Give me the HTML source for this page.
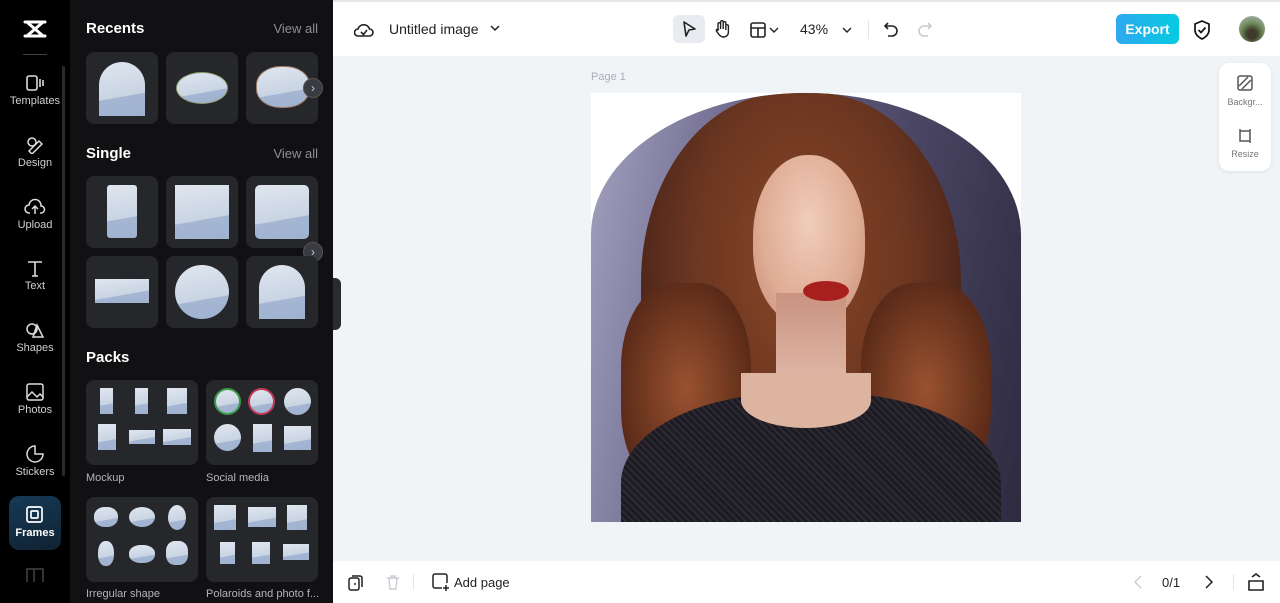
<!DOCTYPE html>
<html><head><meta charset="utf-8"><style>
*{box-sizing:border-box;margin:0;padding:0}
body{width:1280px;height:603px;overflow:hidden;font-family:"Liberation Sans",sans-serif;background:#f1f4f7;position:relative}
.abs{position:absolute}
#rail{left:0;top:0;width:70px;height:603px;background:#000}
#panel{left:70px;top:0;width:263px;height:603px;background:#111113}
.nav{position:absolute;left:0;width:70px;text-align:center;color:#cfcfd2;font-size:11px}
.nav svg{display:block;margin:0 auto 3px}
.h{position:absolute;left:16px;color:#fff;font-weight:bold;font-size:15px}
.va{position:absolute;right:15px;color:#8e8e93;font-size:13px}
.card{position:absolute;width:72px;height:72px;background:#26272b;border-radius:8px;overflow:hidden}
.sky{position:absolute;background:linear-gradient(170deg,#dfe6ef 0%,#c9d4e3 62%,#a4b6d3 63%,#9fb2d0 100%)}
.pk{position:absolute;width:112px;height:85px;background:#26272b;border-radius:8px}
.pl{position:absolute;color:#b5b5b9;font-size:11px}
.arr{position:absolute;width:20px;height:20px;border-radius:50%;background:#3a3b40;border:1px solid #555;color:#ccc;font-size:12px;text-align:center;line-height:18px}
#top{left:333px;top:0;width:947px;height:56px;background:#fff;border-top:2px solid #e4e6ea}
#bot{left:333px;top:561px;width:947px;height:42px;background:#fff}
</style></head><body>
<div id="rail" class="abs">
 <svg class="abs" style="left:23px;top:19px" width="24" height="20" viewBox="0 0 24 20"><path d="M2 3h20M2 17h20M5 4l14 12M19 4L5 16" stroke="#fff" stroke-width="3" fill="none" stroke-linecap="round"/></svg>
 <div class="abs" style="left:23px;top:54px;width:24px;height:1px;background:#444"></div>
 <div class="abs" style="left:62px;top:66px;width:3px;height:410px;background:#2a2a2d;border-radius:2px"></div>
 <div class="nav" style="top:74px"><svg width="20" height="18"><rect x="2" y="2" width="10" height="14" rx="2" fill="none" stroke="#ddd" stroke-width="1.6"/><path d="M15 5v8M18 6v6" stroke="#ddd" stroke-width="1.6"/></svg>Templates</div>
 <div class="nav" style="top:136px"><svg width="20" height="18"><circle cx="7" cy="6" r="4" fill="none" stroke="#ddd" stroke-width="1.5"/><path d="M4 15l10-10 3 3-10 10z" fill="none" stroke="#ddd" stroke-width="1.5"/></svg>Design</div>
 <div class="nav" style="top:198px"><svg width="22" height="18"><path d="M6 15H5a4 4 0 0 1 0-8 6 6 0 0 1 12 1 3.5 3.5 0 0 1 0 7h-1M11 16V9M8 11l3-3 3 3" fill="none" stroke="#ddd" stroke-width="1.5"/></svg>Upload</div>
 <div class="nav" style="top:259px"><svg width="20" height="18"><path d="M3 3h14M10 3v14M7 17h6" stroke="#ddd" stroke-width="1.6" fill="none"/></svg>Text</div>
 <div class="nav" style="top:321px"><svg width="20" height="18"><circle cx="7" cy="8" r="5" fill="none" stroke="#ddd" stroke-width="1.5"/><path d="M12 4l6 12H8z" fill="none" stroke="#ddd" stroke-width="1.5"/></svg>Shapes</div>
 <div class="nav" style="top:383px"><svg width="20" height="18"><rect x="2" y="1" width="16" height="16" rx="2" fill="none" stroke="#ddd" stroke-width="1.5"/><path d="M2 14l5-5 5 5 3-3 3 3" fill="none" stroke="#ddd" stroke-width="1.5"/></svg>Photos</div>
 <div class="nav" style="top:445px"><svg width="20" height="18"><path d="M10 1a8 8 0 1 0 8 8h-8z" fill="none" stroke="#ddd" stroke-width="1.5"/></svg>Stickers</div>
 <div class="abs" style="left:9px;top:496px;width:52px;height:54px;border-radius:10px;background:linear-gradient(160deg,#163a56,#102232)"></div>
 <div class="nav" style="top:506px;color:#fff;font-weight:bold"><svg width="20" height="18"><rect x="2" y="1" width="15" height="15" rx="2" fill="none" stroke="#fff" stroke-width="1.7"/><rect x="6" y="5" width="7" height="7" rx="1" fill="none" stroke="#fff" stroke-width="1.7"/></svg>Frames</div>
 <svg class="abs" style="left:26px;top:568px" width="18" height="14"><rect x="1" y="1" width="16" height="14" fill="none" stroke="#444" stroke-width="1.5"/><path d="M8 1v14" stroke="#444" stroke-width="1.5"/></svg>
</div>
<div id="panel" class="abs">
 <div class="h" style="top:20px">Recents</div><div class="va" style="top:21px">View all</div>
 <div class="card" style="left:16px;top:52px"><div class="sky" style="left:13px;top:10px;width:46px;height:54px;border-radius:23px 23px 0 0"></div></div>
 <div class="card" style="left:96px;top:52px"><div class="sky" style="left:10px;top:20px;width:52px;height:32px;border-radius:50%;border:1px solid #8a9d6b"></div></div>
 <div class="card" style="left:176px;top:52px"><div class="sky" style="left:10px;top:14px;width:54px;height:42px;border-radius:45%;border:1px solid #a0785e"></div></div>
 <div class="arr" style="left:233px;top:78px">›</div>
 <div class="h" style="top:145px">Single</div><div class="va" style="top:146px">View all</div>
 <div class="card" style="left:16px;top:176px"><div class="sky" style="left:21px;top:9px;width:30px;height:53px;border-radius:3px"></div></div>
 <div class="card" style="left:96px;top:176px"><div class="sky" style="left:9px;top:9px;width:54px;height:54px"></div></div>
 <div class="card" style="left:176px;top:176px"><div class="sky" style="left:9px;top:9px;width:54px;height:54px;border-radius:5px"></div></div>
 <div class="arr" style="left:233px;top:242px">›</div>
 <div class="card" style="left:16px;top:256px"><div class="sky" style="left:9px;top:23px;width:54px;height:24px"></div></div>
 <div class="card" style="left:96px;top:256px"><div class="sky" style="left:9px;top:9px;width:54px;height:54px;border-radius:50%"></div></div>
 <div class="card" style="left:176px;top:256px"><div class="sky" style="left:13px;top:9px;width:46px;height:54px;border-radius:23px 23px 0 0"></div></div>
 <div class="h" style="top:349px">Packs</div>
 <div class="pk" style="left:16px;top:380px">
  <div class="sky" style="left:14px;top:8px;width:13px;height:26px"></div><div class="sky" style="left:49px;top:8px;width:13px;height:26px"></div><div class="sky" style="left:81px;top:8px;width:20px;height:26px"></div>
  <div class="sky" style="left:12px;top:44px;width:18px;height:26px"></div><div class="sky" style="left:43px;top:50px;width:26px;height:14px"></div><div class="sky" style="left:77px;top:49px;width:28px;height:16px"></div></div>
 <div class="pk" style="left:136px;top:380px">
  <div class="sky" style="left:8px;top:8px;width:27px;height:27px;border-radius:50%;border:2px solid #3a9a4a"></div><div class="sky" style="left:42px;top:8px;width:27px;height:27px;border-radius:50%;border:2px solid #c23a55"></div><div class="sky" style="left:78px;top:8px;width:27px;height:27px;border-radius:50%"></div>
  <div class="sky" style="left:8px;top:44px;width:27px;height:27px;border-radius:50%"></div><div class="sky" style="left:47px;top:44px;width:19px;height:28px"></div><div class="sky" style="left:78px;top:46px;width:27px;height:24px"></div></div>
 <div class="pl" style="left:16px;top:472px">Mockup</div><div class="pl" style="left:136px;top:472px">Social media</div>
 <div class="pk" style="left:16px;top:497px">
  <div class="sky" style="left:8px;top:10px;width:24px;height:20px;border-radius:45%"></div><div class="sky" style="left:43px;top:10px;width:26px;height:20px;border-radius:50%"></div><div class="sky" style="left:82px;top:8px;width:18px;height:25px;border-radius:50%"></div>
  <div class="sky" style="left:12px;top:44px;width:16px;height:25px;border-radius:45%"></div><div class="sky" style="left:43px;top:48px;width:26px;height:18px;border-radius:45%"></div><div class="sky" style="left:80px;top:44px;width:22px;height:24px;border-radius:40%"></div></div>
 <div class="pk" style="left:136px;top:497px">
  <div class="sky" style="left:8px;top:8px;width:22px;height:25px"></div><div class="sky" style="left:42px;top:10px;width:28px;height:20px"></div><div class="sky" style="left:81px;top:8px;width:20px;height:25px"></div>
  <div class="sky" style="left:14px;top:45px;width:15px;height:22px"></div><div class="sky" style="left:46px;top:45px;width:18px;height:22px"></div><div class="sky" style="left:77px;top:47px;width:26px;height:16px"></div></div>
 <div class="pl" style="left:16px;top:588px">Irregular shape</div><div class="pl" style="left:136px;top:588px">Polaroids and photo f...</div>
</div>
<div class="abs" style="left:333px;top:278px;width:8px;height:52px;background:#2a2b2f;border-radius:0 6px 6px 0"></div>
<div id="top" class="abs">
 <svg class="abs" style="left:21px;top:19px" width="20" height="18"><path d="M5 15H4a3.5 3.5 0 0 1 0-7 6 6 0 0 1 11.5 0 3.5 3.5 0 0 1 0 7H5zM7 11l2.5 2.5L13 9" fill="none" stroke="#222" stroke-width="1.6"/></svg>
 <div class="abs" style="left:56px;top:19px;font-size:14px;color:#222">Untitled image</div>
 <svg class="abs" style="left:157px;top:22px" width="10" height="8"><path d="M1 2l4 4 4-4" fill="none" stroke="#222" stroke-width="1.5"/></svg>
 <div class="abs" style="left:340px;top:13px;width:32px;height:28px;border-radius:6px;background:#e8ecf0"></div>
 <svg class="abs" style="left:348px;top:18px" width="16" height="18"><path d="M3 2l11 7-6 1-3 6z" fill="none" stroke="#222" stroke-width="1.6" stroke-linejoin="round"/></svg>
 <svg class="abs" style="left:380px;top:17px" width="18" height="20"><path d="M5 11V5a1.3 1.3 0 0 1 2.6 0v5V3a1.3 1.3 0 0 1 2.6 0v7V4a1.3 1.3 0 0 1 2.6 0v7V7a1.3 1.3 0 0 1 2.6 0v6c0 3-2 5-5 5-2 0-3-1-4-2l-3-4a1.3 1.3 0 0 1 2-1.5z" fill="none" stroke="#222" stroke-width="1.4"/></svg>
 <svg class="abs" style="left:417px;top:20px" width="16" height="16"><rect x="1" y="1" width="14" height="14" rx="2" fill="none" stroke="#222" stroke-width="1.6"/><path d="M1 6h14M8 6v9" stroke="#222" stroke-width="1.6"/></svg>
 <svg class="abs" style="left:436px;top:24px" width="10" height="8"><path d="M1 2l4 4 4-4" fill="none" stroke="#222" stroke-width="1.4"/></svg>
 <div class="abs" style="left:467px;top:19px;font-size:14px;color:#222">43%</div>
 <svg class="abs" style="left:509px;top:24px" width="10" height="8"><path d="M1 2l4 4 4-4" fill="none" stroke="#222" stroke-width="1.4"/></svg>
 <div class="abs" style="left:535px;top:19px;width:1px;height:18px;background:#e2e4e8"></div>
 <svg class="abs" style="left:550px;top:19px" width="16" height="18"><path d="M5 2L2 5l3 3M2 5h7a5 5 0 0 1 0 10H5" fill="none" stroke="#222" stroke-width="1.6"/></svg>
 <svg class="abs" style="left:584px;top:19px" width="16" height="18"><path d="M11 2l3 3-3 3M14 5H7a5 5 0 0 0 0 10h4" fill="none" stroke="#c8ccd2" stroke-width="1.6"/></svg>
 <div class="abs" style="left:783px;top:12px;width:63px;height:30px;border-radius:6px;background:linear-gradient(90deg,#2fa8f0,#05cbe0);color:#fff;font-weight:bold;font-size:14px;text-align:center;line-height:30px">Export</div>
 <svg class="abs" style="left:860px;top:18px" width="18" height="20"><path d="M9 1l7 3v6c0 4-3 7-7 9-4-2-7-5-7-9V4z" fill="none" stroke="#111" stroke-width="1.7"/><path d="M5.5 10l2.5 2.5 4.5-5" fill="none" stroke="#111" stroke-width="1.7"/></svg>
 <div class="abs" style="left:906px;top:14px;width:26px;height:26px;border-radius:50%;background:radial-gradient(circle at 50% 70%,#3d3a2a 20%,#6f8a5a 50%,#9aa99c 80%)"></div>
</div>
<div class="abs" style="left:591px;top:71px;font-size:11px;color:#a9afb8">Page 1</div>
<div class="abs" style="left:591px;top:93px;width:430px;height:429px;background:#fff;overflow:hidden">
 <div class="abs" style="left:0;top:0;width:430px;height:429px;border-radius:215px 215px 0 0/142px 142px 0 0;overflow:hidden;background:linear-gradient(100deg,#a4a2c0 0%,#6e6a8e 30%,#4b4664 65%,#2e2a40 100%)">
  <div class="abs" style="left:50px;top:0;width:320px;height:420px;border-radius:45% 45% 35% 35%;background:radial-gradient(ellipse at 50% 40%,#8a4828 0%,#6a3520 50%,#44221a 80%,transparent 100%)"></div>
  <div class="abs" style="left:30px;top:190px;width:130px;height:210px;border-radius:40%;background:radial-gradient(#9a5230,#5a2a18 75%,transparent)"></div>
  <div class="abs" style="left:270px;top:190px;width:130px;height:210px;border-radius:40%;background:radial-gradient(#9a5230,#5a2a18 75%,transparent)"></div>
  <div class="abs" style="left:162px;top:62px;width:112px;height:170px;border-radius:48% 48% 45% 45%;background:radial-gradient(ellipse at 50% 40%,#f0cdbb 0%,#dfac94 60%,#c4897a 100%)"></div>
  <div class="abs" style="left:185px;top:200px;width:70px;height:110px;background:linear-gradient(#c99380,#e5bfae)"></div>
  <div class="abs" style="left:212px;top:188px;width:46px;height:20px;border-radius:50%;background:#a8201e"></div>
  <div class="abs" style="left:30px;top:300px;width:380px;height:200px;border-radius:45% 45% 0 0;background:repeating-linear-gradient(45deg,#1c1a22 0 3px,#2e2a32 3px 5px)"></div>
  <div class="abs" style="left:150px;top:280px;width:130px;height:55px;border-radius:0 0 50% 50%;background:#dcb4a0"></div>
 </div>
</div>
<div class="abs" style="left:1219px;top:63px;width:52px;height:108px;background:#fff;border-radius:10px;box-shadow:0 1px 4px rgba(0,0,0,.08)">
 <svg class="abs" style="left:18px;top:12px" width="16" height="16"><rect x="1" y="1" width="14" height="14" rx="2" fill="none" stroke="#555" stroke-width="1.5"/><path d="M2 11l9-9M5 14l9-9" stroke="#555" stroke-width="1.5"/></svg>
 <div class="abs" style="left:0;top:34px;width:52px;text-align:center;font-size:9px;color:#777">Backgr...</div>
 <svg class="abs" style="left:18px;top:64px" width="16" height="16"><path d="M3 2v12h10M3 4h10v6M13 2v14" fill="none" stroke="#555" stroke-width="1.5"/></svg>
 <div class="abs" style="left:0;top:86px;width:52px;text-align:center;font-size:9px;color:#777">Resize</div>
</div>
<div id="bot" class="abs">
 <svg class="abs" style="left:15px;top:13px" width="16" height="17"><rect x="1" y="4" width="10" height="12" rx="2" fill="none" stroke="#222" stroke-width="1.5"/><path d="M4 2h8a2 2 0 0 1 2 2v9M6 10h2" stroke="#222" stroke-width="1.5" fill="none"/></svg>
 <svg class="abs" style="left:53px;top:13px" width="14" height="17"><path d="M1 4h12M5 4V2h4v2M3 4l1 11h6l1-11" fill="none" stroke="#c8ccd2" stroke-width="1.4"/></svg>
 <div class="abs" style="left:80px;top:13px;width:1px;height:16px;background:#e2e4e8"></div>
 <svg class="abs" style="left:99px;top:12px" width="18" height="19"><path d="M10 15H3a2 2 0 0 1-2-2V3a2 2 0 0 1 2-2h10a2 2 0 0 1 2 2v7M14 12v6M11 15h6" fill="none" stroke="#222" stroke-width="1.5"/></svg>
 <div class="abs" style="left:121px;top:14px;font-size:13px;color:#222">Add page</div>
 <svg class="abs" style="left:800px;top:14px" width="10" height="14"><path d="M8 1L2 7l6 6" fill="none" stroke="#c8ccd2" stroke-width="1.4"/></svg>
 <div class="abs" style="left:829px;top:14px;font-size:13px;color:#222">0/1</div>
 <svg class="abs" style="left:871px;top:14px" width="10" height="14"><path d="M2 1l6 6-6 6" fill="none" stroke="#222" stroke-width="1.5"/></svg>
 <div class="abs" style="left:900px;top:13px;width:1px;height:16px;background:#e2e4e8"></div>
 <svg class="abs" style="left:915px;top:12px" width="16" height="18"><path d="M4 4l4-3 4 3M1 8h14v9H1z" fill="none" stroke="#222" stroke-width="1.6"/></svg>
</div>
</body></html>
